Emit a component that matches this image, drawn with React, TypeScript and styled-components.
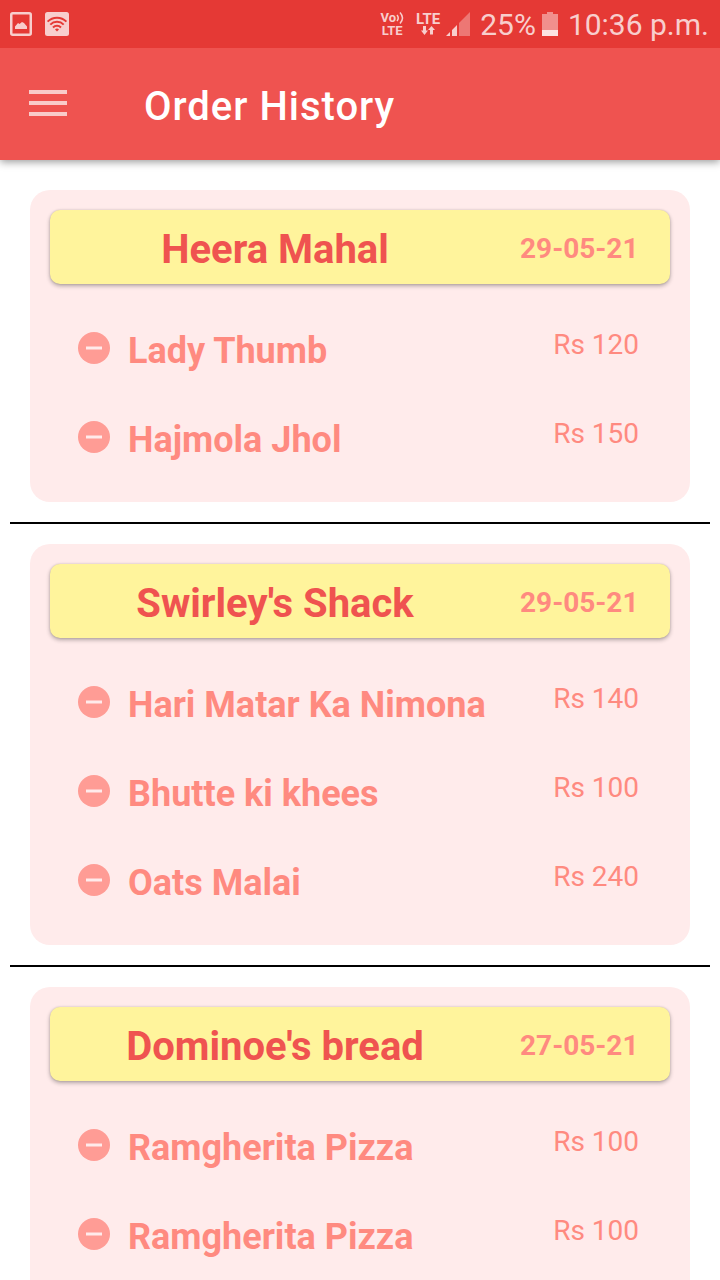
import React from "react";
import styled, { createGlobalStyle } from "styled-components";

const GlobalStyle = createGlobalStyle`
  *, *::before, *::after { box-sizing: border-box; }
  body {
    margin: 0;
    background: #ffffff;
    font-family: Roboto, "Liberation Sans", sans-serif;
  }
`;

const Screen = styled.div`
  display: flex;
  flex-direction: column;
  height: 100vh;
  overflow: hidden;
`;

const StatusBar = styled.div`
  display: flex;
  position: relative;
  z-index: 2;
  flex: none;
  align-items: center;
  justify-content: space-between;
  height: 48px;
  padding: 0 11px 0 10px;
  background: #e53935;
  color: #f8cecd;
`;

const StatusGroup = styled.div<{ $gap: number }>`
  display: flex;
  align-items: center;
  gap: ${({ $gap }) => $gap}px;

  svg { display: block; flex: none; }
`;

const StatusText = styled.span`
  padding-top: 2px;
  font-size: 30px;
  line-height: 48px;
  white-space: nowrap;
`;

const NetworkBadge = styled.span`
  display: flex;
  flex-direction: column;
  align-items: center;
`;

const NetworkLabel = styled.span<{ $size: number }>`
  display: flex;
  align-items: center;
  font-size: ${({ $size }) => $size}px;
  font-weight: 700;
  line-height: 13px;
`;

const AppBar = styled.header`
  display: flex;
  position: relative;
  z-index: 1;
  flex: none;
  align-items: center;
  gap: 68px;
  height: 112px;
  padding: 0 20px;
  background: #ef5350;
  box-shadow: 0 2px 8px rgba(0, 0, 0, 0.4);
`;

const MenuButton = styled.button`
  display: flex;
  align-items: center;
  justify-content: center;
  width: 56px;
  height: 56px;
  padding: 0 0 2px;
  border: 0;
  background: none;
  color: #f9cbca;
  cursor: pointer;
`;

const PageTitle = styled.h1`
  margin: 0;
  padding-top: 6px;
  color: #ffffff;
  font-size: 40px;
  font-weight: 500;
  line-height: 48px;
  letter-spacing: 1px;
`;

const OrderList = styled.main`
  flex: 1;
  min-height: 0;
  padding: 30px 10px;
  overflow-y: auto;
  scrollbar-width: none;
`;

const Divider = styled.hr`
  height: 2px;
  margin: 20px 0;
  border: 0;
  background: #000000;
`;

const OrderCard = styled.section`
  margin: 0 20px;
  padding: 20px;
  border-radius: 20px;
  background: #ffebeb;
`;

const OrderHeader = styled.header`
  display: flex;
  align-items: center;
  height: 74px;
  margin-bottom: 20px;
  border-radius: 10px;
  background: #fff49c;
  box-shadow: 0 2px 4px rgba(0, 0, 0, 0.3), 0 0 2px rgba(0, 0, 0, 0.16);
`;

const RestaurantName = styled.h2`
  flex: 1;
  margin: 0;
  padding-top: 6px;
  color: #ef5350;
  font-size: 40px;
  font-weight: 700;
  line-height: 48px;
  text-align: center;
`;

const OrderDate = styled.time`
  width: 170px;
  padding: 4px 0 0 20px;
  color: #ff8a80;
  font-size: 28px;
  font-weight: 700;
  line-height: 36px;
`;

const ItemList = styled.ul`
  margin: 0;
  padding: 0;
  list-style: none;
`;

const ItemRow = styled.li`
  display: flex;
  align-items: center;
  height: 89px;
  padding: 0 31px 0 28px;
  color: #ff8a80;
`;

const RemoveButton = styled.button`
  display: flex;
  flex: none;
  width: 32px;
  height: 34px;
  margin-right: 18px;
  padding: 0 0 2px;
  border: 0;
  background: none;
  color: #ff9c95;
  cursor: pointer;
`;

const ItemName = styled.span`
  flex: 1;
  padding-top: 4px;
  font-size: 36px;
  font-weight: 700;
  line-height: 44px;
`;

const ItemPrice = styled.span`
  padding-bottom: 8px;
  font-size: 28px;
  line-height: 36px;
  white-space: nowrap;
`;

const PictureIcon = () => (
  <svg width="22" height="24" viewBox="0 0 22 24" aria-hidden="true">
    <rect x="1.25" y="1.25" width="19.5" height="21.5" rx="1.5" fill="none" stroke="currentColor" strokeWidth="2.5" />
    <path d="M5 17v-2.5l3-3.5 1.5 1 2.5-2 2 1 3 3.5V17z" fill="currentColor" />
  </svg>
);

const WifiIcon = () => (
  <svg width="24" height="24" viewBox="0 0 24 24" aria-hidden="true">
    <rect width="24" height="24" rx="2.5" fill="currentColor" />
    <g fill="none" stroke="#e53935" strokeWidth="2">
      <path d="M2.6 9.6a13.2 13.2 0 0 1 18.8 0" />
      <path d="M5.3 12.6a9.5 9.5 0 0 1 13.4 0" />
      <path d="M8 15.5a5.7 5.7 0 0 1 8 0" />
    </g>
    <path d="M10 17.4a3 3 0 0 1 4 0l-2 2.2z" fill="#e53935" />
  </svg>
);

const CallWaves = () => (
  <svg width="8" height="12" viewBox="0 0 8 12" fill="none" stroke="currentColor" strokeWidth="1.5" aria-hidden="true">
    <path d="M1 3q2.5 3 0 6M4 0.5q5 5.5 0 11" />
  </svg>
);

const DataArrows = () => (
  <svg width="14" height="9" viewBox="0 0 14 9" fill="currentColor" aria-hidden="true">
    <path d="M2 0h3v4.5h2L3.5 9 0 4.5h2zM9 8.5h3V4h2L10.5 0 7 4h2z" />
  </svg>
);

const SignalIcon = () => (
  <svg width="24" height="24" viewBox="0 0 24 24" fill="currentColor" aria-hidden="true">
    <path d="M0 24l4-4v4zM6 24v-6l5-5v11z" />
    <path d="M13 24V11L24 0v24z" opacity="0.42" />
  </svg>
);

const BatteryIcon = () => (
  <svg width="16" height="24" viewBox="0 0 16 24" aria-hidden="true">
    <path d="M5 0h6v2h5v16H0V2h5z" fill="#f18f8d" />
    <path d="M0 18h16v6H0z" fill="#fce2e1" />
  </svg>
);

const MenuIcon = () => (
  <svg width="38" height="26" viewBox="0 0 38 26" fill="currentColor" aria-hidden="true">
    <path d="M0 0h38v4H0zM0 11h38v4H0zM0 22h38v4H0z" />
  </svg>
);

const MinusIcon = () => (
  <svg width="32" height="32" viewBox="0 0 32 32" aria-hidden="true">
    <circle cx="16" cy="16" r="16" fill="currentColor" />
    <path d="M8 14.5h16v3H8z" fill="#ffebeb" />
  </svg>
);

type Item = { name: string; price: number };
type Order = { restaurant: string; date: string; items: Item[] };

const orders: Order[] = [
  {
    restaurant: "Heera Mahal",
    date: "29-05-21",
    items: [
      { name: "Lady Thumb", price: 120 },
      { name: "Hajmola Jhol", price: 150 },
    ],
  },
  {
    restaurant: "Swirley's Shack",
    date: "29-05-21",
    items: [
      { name: "Hari Matar Ka Nimona", price: 140 },
      { name: "Bhutte ki khees", price: 100 },
      { name: "Oats Malai", price: 240 },
    ],
  },
  {
    restaurant: "Dominoe's bread",
    date: "27-05-21",
    items: [
      { name: "Ramgherita Pizza", price: 100 },
      { name: "Ramgherita Pizza", price: 100 },
    ],
  },
];

export default function App() {
  return (
    <Screen>
      <GlobalStyle />
      <StatusBar>
        <StatusGroup $gap={13}>
          <PictureIcon />
          <WifiIcon />
        </StatusGroup>
        <StatusGroup $gap={10}>
          <StatusGroup $gap={12}>
            <NetworkBadge>
              <NetworkLabel $size={13}>
                Vo
                <CallWaves />
              </NetworkLabel>
              <NetworkLabel $size={13}>LTE</NetworkLabel>
            </NetworkBadge>
            <StatusGroup $gap={6}>
              <NetworkBadge>
                <NetworkLabel $size={15}>LTE</NetworkLabel>
                <NetworkLabel $size={15}>
                  <DataArrows />
                </NetworkLabel>
              </NetworkBadge>
              <SignalIcon />
            </StatusGroup>
          </StatusGroup>
          <StatusGroup $gap={6}>
            <StatusText>25%</StatusText>
            <BatteryIcon />
          </StatusGroup>
          <StatusText>10:36 p.m.</StatusText>
        </StatusGroup>
      </StatusBar>
      <AppBar>
        <MenuButton type="button" aria-label="Open menu">
          <MenuIcon />
        </MenuButton>
        <PageTitle>Order History</PageTitle>
      </AppBar>
      <OrderList>
        {orders.map((order, index) => (
          <React.Fragment key={order.restaurant}>
            {index > 0 && <Divider />}
            <OrderCard>
              <OrderHeader>
                <RestaurantName>{order.restaurant}</RestaurantName>
                <OrderDate>{order.date}</OrderDate>
              </OrderHeader>
              <ItemList>
                {order.items.map((item, itemIndex) => (
                  <ItemRow key={itemIndex}>
                    <RemoveButton type="button" aria-label={`Remove ${item.name}`}>
                      <MinusIcon />
                    </RemoveButton>
                    <ItemName>{item.name}</ItemName>
                    <ItemPrice>Rs {item.price}</ItemPrice>
                  </ItemRow>
                ))}
              </ItemList>
            </OrderCard>
          </React.Fragment>
        ))}
      </OrderList>
    </Screen>
  );
}
